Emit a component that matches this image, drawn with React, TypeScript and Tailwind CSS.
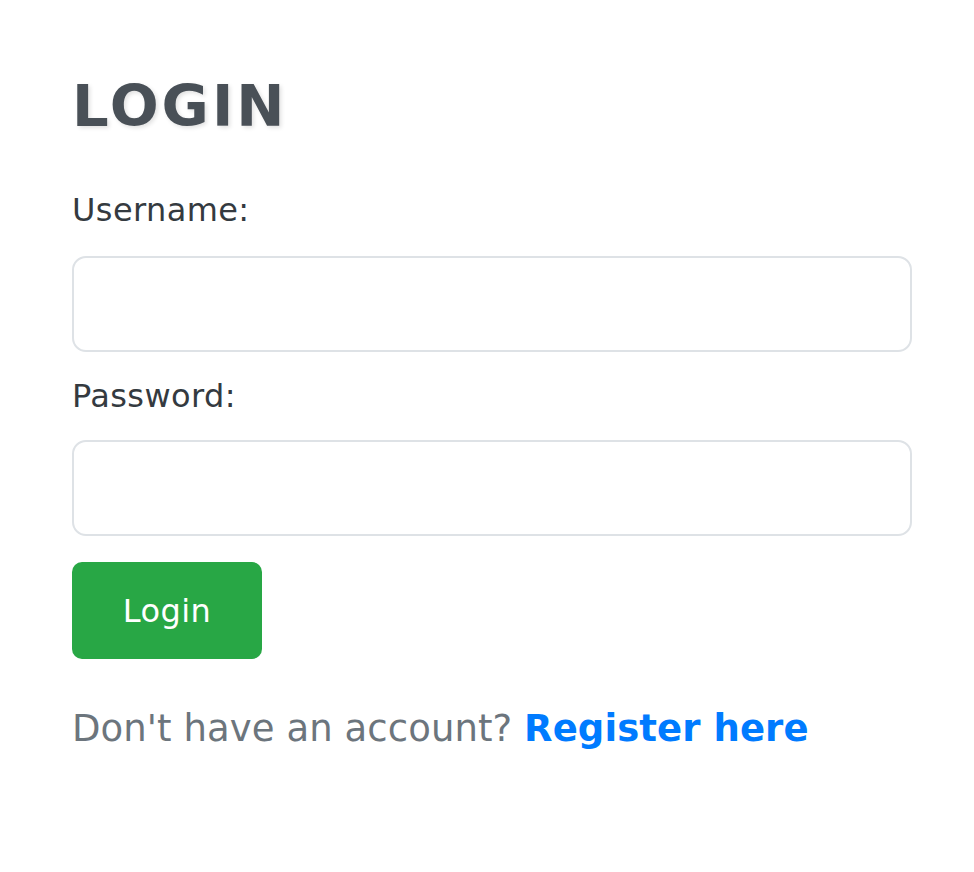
import React from "react";

export default function App() {
  return (
    <div className="min-h-screen bg-white pt-[72px] pl-[72px] font-['DejaVu_Sans',sans-serif]">
      <div className="w-[840px]">
        <h1 className="text-[57.6px] leading-[1.2] font-bold tracking-[3px] text-[#495057] [text-shadow:2px_2px_4px_rgba(0,0,0,0.12)]">
          LOGIN
        </h1>
        <form className="mt-[45px]" onSubmit={(e) => e.preventDefault()}>
          <div>
            <label className="block text-[32px] leading-[48px] tracking-[0.4px] text-[#343a40]">Username:</label>
            <input
              type="text"
              className="mt-[22px] block w-full h-[96px] rounded-[14px] border-2 border-[#dee2e6] bg-white px-6 text-[32px] outline-none"
            />
          </div>
          <div className="mt-[20px]">
            <label className="block text-[32px] leading-[48px] tracking-[0.4px] text-[#343a40]">Password:</label>
            <input
              type="password"
              className="mt-[20px] block w-full h-[96px] rounded-[14px] border-2 border-[#dee2e6] bg-white px-6 text-[32px] outline-none"
            />
          </div>
          <button
            type="submit"
            className="mt-[26px] block w-[190px] h-[97px] rounded-[10px] bg-[#28a745] text-white text-[32px] leading-[48px] tracking-[0.4px]"
          >
            Login
          </button>
        </form>
        <p className="mt-[42px] text-[37px] leading-[1.5] tracking-[0.08px] text-[#6c757d]">
          Don't have an account?{" "}
          <a href="#" className="font-bold text-[#007bff] no-underline">
            Register here
          </a>
        </p>
      </div>
    </div>
  );
}
